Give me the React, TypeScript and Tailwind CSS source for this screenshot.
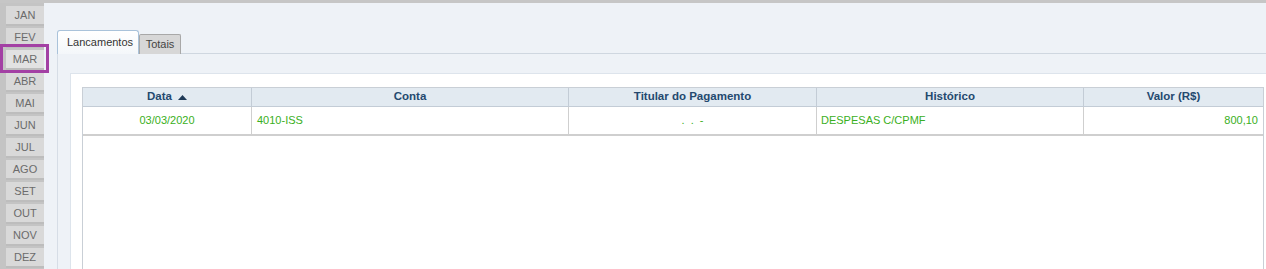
const months = ['JAN', 'FEV', 'MAR', 'ABR', 'MAI', 'JUN', 'JUL', 'AGO', 'SET', 'OUT', 'NOV', 'DEZ']

const columns = [
  { label: 'Data', width: 'w-[169px]', sort: true },
  { label: 'Conta', width: 'w-[317px]' },
  { label: 'Titular do Pagamento', width: 'w-[248px]' },
  { label: 'Histórico', width: 'w-[267px]' },
  { label: 'Valor (R$)', width: 'flex-1' },
]

export default function App() {
  return (
    <div
      className="relative flex h-[269px] w-[1266px] overflow-hidden border-t-[3px] border-[#c6c6c6] bg-[#eef2f7] text-[11px]"
      style={{ fontFamily: '"Liberation Sans", Arial, sans-serif' }}
    >
      {/* Month picker */}
      <div className="flex w-[44px] shrink-0 flex-col gap-[2px] bg-[#c4c4c4] pl-[6px] pt-[3px]">
        {months.map((m) => (
          <button
            key={m}
            className={
              m === 'MAR'
                ? 'h-[20px] w-[38px] shrink-0 border-b-2 border-[#bdbdbd] bg-[#e2e2e2] text-[#6b6b6b]'
                : 'h-[20px] w-[38px] shrink-0 border-b-2 border-[#bdbdbd] bg-[#d9d9d9] text-[#6b6b6b]'
            }
          >
            {m}
          </button>
        ))}
      </div>

      {/* highlight box around the selected month */}
      <div className="pointer-events-none absolute left-0 top-[41px] h-[29px] w-[49px] border-[3px] border-[#a340a4]" />

      {/* Main */}
      <div className="flex min-w-0 flex-1 flex-col pl-[13px] pt-[27px]">
        <div className="flex items-end">
          <div className="flex h-[24px] w-[82px] items-center rounded-t-[3px] border border-b-0 border-[#a9c2da] bg-gradient-to-b from-[#ffffff] to-[#f4f7fa] pl-[9px] text-[#333]">
            Lancamentos
          </div>
          <div className="flex h-[20px] w-[42px] items-center justify-center rounded-t-[2px] border border-b-0 border-[#a8a8a8] bg-[#d7d7d7] text-[#444]">
            Totais
          </div>
          <div className="h-px flex-1 bg-[#cfd7e0]" />
        </div>

        <div className="flex flex-1 flex-col border-l border-[#d6dde6] pl-[12px] pt-[19px]">
          <div className="flex flex-1 flex-col border-l border-t border-[#dde4ec] bg-white pl-[11px] pt-[13px]">
            <div className="flex w-[1182px] flex-1 flex-col border-x border-t border-[#c9cfd6]">
              <div className="flex h-[19px] border-b border-[#c3ccd6] bg-[#e2eaf1]">
                {columns.map((c, i) => (
                  <div
                    key={c.label}
                    className={
                      (i < columns.length - 1 ? 'border-r border-[#c3ccd6] ' : '') +
                      c.width +
                      ' flex items-center justify-center gap-[6px] text-[11.5px] font-bold text-[#24496f]'
                    }
                  >
                    {c.label}
                    {c.sort && (
                      <svg width="9" height="5" viewBox="0 0 9 5">
                        <path d="M0 5 L4.5 0 L9 5 Z" fill="#1f3a57" />
                      </svg>
                    )}
                  </div>
                ))}
              </div>

              <div className="flex h-[29px] border-b-2 border-[#cfcfcf] text-[#3aaf22]">
                <div className="flex w-[169px] items-center justify-center border-r border-[#cfcfcf]">03/03/2020</div>
                <div className="flex w-[317px] items-center border-r border-[#cfcfcf] pl-[5px]">4010-ISS</div>
                <div className="flex w-[248px] items-center justify-center border-r border-[#cfcfcf]">. &nbsp;. &nbsp;-</div>
                <div className="flex w-[267px] items-center border-r border-[#cfcfcf] pl-[4px]">DESPESAS C/CPMF</div>
                <div className="flex flex-1 items-center justify-end pr-[5px]">800,10</div>
              </div>

              <div className="flex-1" />
            </div>
          </div>
        </div>
      </div>
    </div>
  )
}
